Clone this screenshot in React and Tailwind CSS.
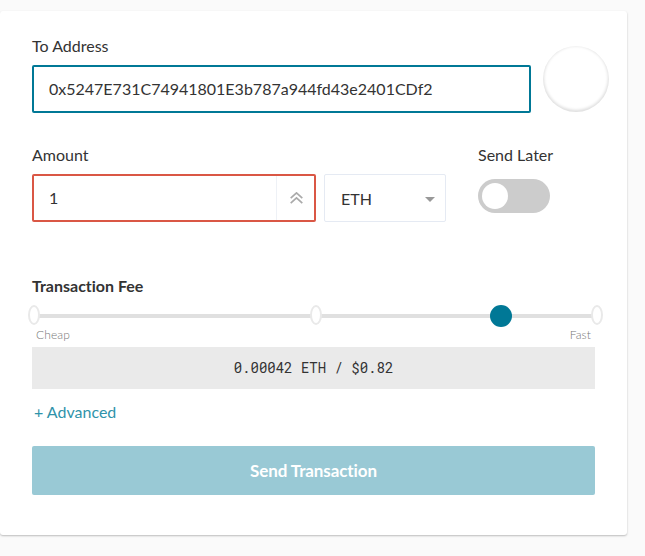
const dots = ['left-[-6px]', 'left-[276px]', 'left-[557px]'];

function FeeSlider() {
  return (
    <div className="relative ml-0.5 mt-[7px] h-[22px] w-[563px]">
      <div className="absolute inset-x-0 top-[9px] h-1 bg-[#e0e0e0]" />
      {dots.map((pos) => (
        <span key={pos} className={`absolute top-0 h-5 w-3 rounded-[50%] border-2 border-[#e9e9e9] bg-white ${pos}`} />
      ))}
      <span className="absolute left-[456px] top-0 size-[22px] rounded-full bg-[#007896]" />
    </div>
  );
}

export default function App() {
  return (
    <div className="h-[556px] w-[645px] overflow-hidden bg-[#fafafa] pt-[11px] font-['Lato',sans-serif] text-base leading-6 text-[#333] [font-variant-ligatures:none]">
      <main className="h-[524px] w-[627px] rounded-[3px] bg-white px-8 pt-[23px] shadow-[0_1px_2px_rgba(0,0,0,0.25)]">
        <div className="flex">
          <div className="w-[499px] shrink-0">
            <label className="block">To Address</label>
            <div className="mt-[7px] flex h-12 items-center rounded-[2px] border-2 border-[#007896] px-[15px]">
              0x5247E731C74941801E3b787a944fd43e2401CDf2
            </div>
          </div>
          <div className="ml-3 mt-3 size-[66px] shrink-0 rounded-full bg-white shadow-[inset_0_-1px_3px_1px_rgba(0,0,0,0.13)]" />
        </div>

        <div className="mt-[30px] flex">
          <div className="w-[284px]">
            <label className="block">Amount</label>
            <div className="mt-[7px] flex h-12 items-stretch rounded-[2px] border-2 border-[#da5745]">
              <span className="flex flex-1 items-center pl-[15px]">1</span>
              <span className="flex w-[38px] items-center justify-center border-l border-[#eef1f6] pl-0.5">
                <svg width="13" height="12" viewBox="0 0 13 12" fill="none" stroke="#aaa" strokeWidth="1.7">
                  <path d="M.7 6.2 6.5.9l5.8 5.3M.7 11.2l5.8-5.3 5.8 5.3" />
                </svg>
              </span>
            </div>
          </div>
          <div className="ml-2 mt-[31px] flex h-12 w-[122px] items-center justify-between rounded-[2px] border border-[#e5eaf3] pl-4 pr-[10px]">
            <span className="pt-0.5">ETH</span>
            <svg width="10" height="5" viewBox="0 0 10 5" className="mt-0.5">
              <path d="M0 0h10L5 5z" fill="#999" />
            </svg>
          </div>
          <div className="ml-8">
            <label className="block">Send Later</label>
            <div className="mt-3 flex h-[34px] w-[72px] items-center rounded-full bg-[#ccc] px-1">
              <span className="size-[26px] rounded-full bg-white" />
            </div>
          </div>
        </div>

        <h2 className="mt-[52px] font-bold">Transaction Fee</h2>
        <FeeSlider />
        <div className="flex h-5 justify-between px-1 text-xs font-light leading-4 tracking-[0.1px] text-[#777]">
          <span>Cheap</span>
          <span>Fast</span>
        </div>
        <div className="flex h-[42px] items-center justify-center bg-[#eaeaea] font-['Roboto_Mono','Liberation_Mono',monospace] text-sm">
          0.00042 ETH / $0.82
        </div>
        <button className="ml-0.5 mt-[11px] block h-6 text-[#2f93aa]">+ Advanced</button>
        <button className="mt-[22px] block h-[49px] w-full rounded-[2px] bg-[#99c9d5] text-[17px] font-bold tracking-[-0.1px] text-white">
          Send Transaction
        </button>
      </main>
    </div>
  );
}
